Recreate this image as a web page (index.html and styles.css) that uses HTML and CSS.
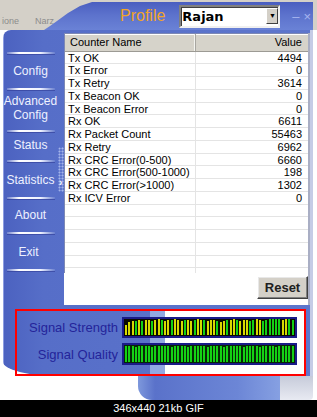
FILE: index.html
```html
<!DOCTYPE html>
<html lang="en">
<head>
    <meta charset="UTF-8">
    <meta name="viewport" content="width=device-width, initial-scale=1.0">
    <title>Statistics</title>
    <link rel="stylesheet" href="styles.css">
</head>
<body>
<div class="screen">
    <div class="top">
        <div class="menu"><span>ione</span><span class="menu-2">Narz</span></div>
        <div class="titlebar">
            <span class="profile">Profile</span>
            <div class="combo"><span class="combo-text">Rajan</span><b class="drop">&#9660;</b></div>
            <div class="wincontrols"><span>&ndash;</span><span>&times;</span></div>
        </div>
    </div>

    <div class="frame">
        <nav class="side">
            <hr class="sep">
            <a href="#" class="item item-config">Config</a>
            <hr class="sep">
            <a href="#" class="item item-adv">Advanced<br>Config</a>
            <hr class="sep">
            <a href="#" class="item item-status">Status</a>
            <hr class="sep">
            <a href="#" class="item item-stats">Statistics</a>
            <hr class="sep">
            <a href="#" class="item item-about">About</a>
            <hr class="sep">
            <a href="#" class="item item-exit">Exit</a>
            <hr class="sep">
        </nav>
        <div class="grip"><span>&rsaquo;</span></div>

        <div class="panel">
            <div class="list">
                <div class="list-head"><div>Counter Name</div><div>Value</div></div>
                <div class="row"><div>Tx OK</div><div>4494</div></div>
                <div class="row"><div>Tx Error</div><div>0</div></div>
                <div class="row"><div>Tx Retry</div><div>3614</div></div>
                <div class="row"><div>Tx Beacon OK</div><div>0</div></div>
                <div class="row"><div>Tx Beacon Error</div><div>0</div></div>
                <div class="row"><div>Rx OK</div><div>6611</div></div>
                <div class="row"><div>Rx Packet Count</div><div>55463</div></div>
                <div class="row"><div>Rx Retry</div><div>6962</div></div>
                <div class="row"><div>Rx CRC Error(0-500)</div><div>6660</div></div>
                <div class="row"><div>Rx CRC Error(500-1000)</div><div>198</div></div>
                <div class="row"><div>Rx CRC Error(&gt;1000)</div><div>1302</div></div>
                <div class="row"><div>Rx ICV Error</div><div>0</div></div>
                <div class="row"><div></div><div></div></div>
                <div class="row"><div></div><div></div></div>
                <div class="row"><div></div><div></div></div>
                <div class="row"><div></div><div></div></div>
                <div class="row"><div></div><div></div></div>
                <div class="row"><div></div><div></div></div>
            </div>
            <div class="actions"><button class="reset">Reset</button></div>
        </div>

        <div class="signal">
            <div class="highlight">
                <div class="meter-row">
                    <span class="label">Signal Strength</span>
                    <div class="meter strength" id="strength"></div>
                </div>
                <div class="meter-row">
                    <span class="label">Signal Quality</span>
                    <div class="meter quality" id="quality"></div>
                </div>
            </div>
        </div>
    </div>

    <div class="bottom">
        <div class="bottom-blue"></div>
        <div class="corner"></div>
    </div>
</div>
<div class="caption">346x440 21kb GIF</div>

<script>
    // bar heights (px) and colours for the two meters
    var strength = [10,13,14,14,15,14,15,15,14,15,16,15,14,15,15,16,15,14,15,15,14,15,16,15,15,14,15,15,14,13,14,15,15,16,15,14,15,15,14,15,16,15,14,15,16,16,16,16,15,16,16,15];
    var strengthColors = 'yyygygyygyygyygyyygyygyygyyygyygyygyyyggyyggggggyyg';
    var quality = [16,16,16,15,16,16,16,16,15,16,16,16,16,16,15,16,16,16,16,15,16,16,16,16,16,15,16,16,16,16,15,16,16,16,16,16,15,16,16,16,16,15,16,16,16,16,15,16,16,16,16,16];

    function fillMeter(id, heights, colors) {
        var box = document.getElementById(id);
        heights.forEach(function (h, i) {
            var bar = document.createElement('span');
            bar.className = colors && colors[i] === 'y' ? 'bar-y' : 'bar-g';
            bar.style.height = h + 'px';
            box.appendChild(bar);
        });
    }

    fillMeter('strength', strength, strengthColors);
    fillMeter('quality', quality, null);
</script>
</body>
</html>
```

FILE: styles.css
```css
* { box-sizing: border-box; }
body { margin: 0; background: #fff; font-family: 'Liberation Sans', Arial, sans-serif; color: #000; }

.screen { width: 317px; height: 400px; overflow: hidden; background: #fff; }

/* Top strip: app menu behind and the skin's title bar */
.top { display: flex; height: 30px; background: #d4d0c8; }
.menu { width: 42px; flex: none; padding: 16px 0 0 2px; font-size: 9px; line-height: 11px; color: #8c8c8c; white-space: nowrap; }
.menu-2 { margin-left: 16px; }

.titlebar {
    flex: 1;
    margin: 2px 4px 0 0;
    display: flex;
    align-items: center;
    padding-left: 78px;
    background: linear-gradient(#4a5ec0, #5c72cc 45%, #6a82d6);
    clip-path: polygon(2px 100%, 8px 86%, 15px 68%, 26px 39%, 38px 14%, 50px 0, 100% 0, 100% 100%);
}
.profile { font-size: 16px; color: #f2a428; }
.combo {
    margin-left: 14px;
    width: 101px;
    height: 23px;
    display: flex;
    align-items: center;
    padding-left: 1px;
    background: #fff;
    border: 2px solid;
    border-color: #808080 #f0f0f0 #f0f0f0 #808080;
    box-shadow: inset 1px 1px #404040;
}
.combo-text { font-family: 'DejaVu Sans', sans-serif; font-weight: bold; font-size: 13px; }
.drop {
    margin-left: auto;
    width: 12px;
    height: 16px;
    background: #d4d0c8;
    border: 1px solid;
    border-color: #fff #404040 #404040 #fff;
    font-size: 7px;
    line-height: 14px;
    text-align: center;
}
.wincontrols { margin-left: 12px; display: flex; gap: 4px; font-size: 13px; color: #a6b4f0; }

/* Main skin frame */
.frame {
    display: grid;
    grid-template-columns: 55px 6px 1fr;
    margin-left: 3px;
    width: 310px;
    border-right: 3px solid #c5cce6;
    background: linear-gradient(90deg, #8c9ce0 0 1px, #4c62c0 1px, #566ec8 40px, #5e76cc);
    border-radius: 8px 0 0 57px / 8px 0 0 14px;
}

.side { padding-top: 22px; display: flex; flex-direction: column; }
.sep {
    margin: 0 auto;
    width: 48px;
    height: 2px;
    border: none;
    background: linear-gradient(90deg, rgba(255,255,255,0.2), #fff 25%, #eef2ff 70%, rgba(255,255,255,0.1));
    box-shadow: 0 1px 0 rgba(40, 50, 140, 0.5);
}
.item { display: flex; align-items: center; justify-content: center; text-align: center; color: #eef1ff; text-decoration: none; font-size: 12px; line-height: 14px; }
.item-config { height: 34px; }
.item-adv { height: 40px; padding-bottom: 4px; }
.item-status { height: 28px; padding-bottom: 3px; }
.item-stats { height: 35px; }
.item-about { height: 33px; padding-bottom: 2px; }
.item-exit { height: 35px; padding-right: 4px; }

.grip {
    align-self: start;
    margin-top: 117px;
    height: 45px;
    border-radius: 3px 0 0 3px;
    background: radial-gradient(circle, #a4b4ea 0.8px, transparent 1.2px) 0 0 / 3px 3px, #5d74cc;
    color: #fff;
    font-size: 10px;
    font-weight: bold;
    line-height: 10px;
    padding: 31px 0 0 1px;
}

/* White list panel */
.panel { margin-top: 3px; height: 272px; background: #fff; border-right: 2px solid #a9aec4; display: flex; flex-direction: column; }
.list { height: 240px; overflow: hidden; border-top: 1px solid #7d88b4; border-left: 1px solid #7d88b4; font-size: 11px; }
.list-head { display: grid; grid-template-columns: 131px 1fr; height: 17.6px; background: #d6d3ca; border-bottom: 1px solid #9c9a94; box-shadow: inset 0 1px #fff; line-height: 16px; }
.list-head div:first-child { padding-left: 5px; border-right: 1px solid #a8a6a0; box-shadow: inset -1px 0 #f4f4f0; }
.list-head div:last-child { text-align: right; padding-right: 6px; }
.row { display: grid; grid-template-columns: 131px 1fr; height: 12.75px; line-height: 12px; border-bottom: 1px solid #e4e4e4; }
.row div:first-child { padding-left: 3px; border-right: 1px solid #e4e4e4; white-space: nowrap; }
.row div:last-child { text-align: right; padding-right: 6px; }

.actions { display: flex; justify-content: flex-end; padding-top: 3px; }
.reset {
    width: 51px;
    height: 23px;
    padding: 0;
    background: #d4d0c8;
    border: 1px solid;
    border-color: #fff #404040 #404040 #fff;
    box-shadow: inset -1px -1px #808080, inset 1px 1px #e8e8e8;
    font-family: 'Liberation Sans', Arial, sans-serif;
    font-weight: bold;
    font-size: 13px;
    color: #202020;
}

/* Signal meters, with the red highlight box */
.signal { grid-column: 1 / -1; padding: 4px 4px 0 12px; }
.highlight {
    height: 67px;
    border: 2px solid #f00;
    padding: 6px 7px 0 0;
    display: grid;
    align-content: start;
    row-gap: 5px;
    background: linear-gradient(90deg, transparent 0 133px, #92a8e2 133px 148px, #fff 148px);
}
.meter-row { display: grid; grid-template-columns: 101px 175px; column-gap: 4px; align-items: center; }
.label { text-align: right; font-size: 13px; color: #24249a; white-space: nowrap; }
.meter {
    display: flex;
    justify-content: space-between;
    align-items: flex-end;
    padding: 0 1px 1px;
    border: 2px solid #1a1a88;
}
.strength { height: 21px; background: #0a0a00; }
.quality { height: 22px; background: #062806; }
.meter span { width: 2px; }
.bar-y { background: #d6da00; }
.bar-g { background: #14d014; }

/* Bottom edge of the skin */
.bottom { display: flex; height: 24px; }
.bottom-blue { margin-left: 138px; width: 142px; background: linear-gradient(90deg, #7e98dc, #5a72ca 12%, #6c86d6 70%, #86a0e2); border-bottom-left-radius: 14px; }
.corner { width: 33px; background: linear-gradient(#c6cbda, #e8eaf2); border-bottom-right-radius: 4px; }

.caption { height: 17px; background: #000; color: #fff; font-size: 11px; line-height: 17px; text-align: center; }
```
